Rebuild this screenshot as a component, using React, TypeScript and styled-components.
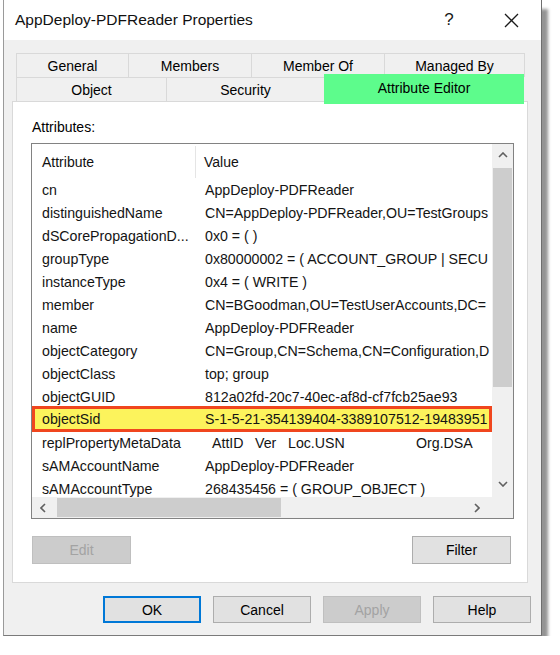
import React from 'react'
import styled, { createGlobalStyle } from 'styled-components'

const GlobalStyle = createGlobalStyle`
  html, body {
    margin: 0;
    padding: 0;
    background: #ffffff;
  }
  body {
    font-family: "Liberation Sans", Arial, sans-serif;
    color: #000000;
  }
  * { box-sizing: border-box; }
`

type Attr = { name: string; value: string; highlight?: boolean; meta?: boolean }

// values are cut where the list view cuts them in the dialog
const attributes: Attr[] = [
  { name: 'cn', value: 'AppDeploy-PDFReader' },
  { name: 'distinguishedName', value: 'CN=AppDeploy-PDFReader,OU=TestGroups' },
  { name: 'dSCorePropagationD...', value: '0x0 = ( )' },
  { name: 'groupType', value: '0x80000002 = ( ACCOUNT_GROUP | SECU' },
  { name: 'instanceType', value: '0x4 = ( WRITE )' },
  { name: 'member', value: 'CN=BGoodman,OU=TestUserAccounts,DC=' },
  { name: 'name', value: 'AppDeploy-PDFReader' },
  { name: 'objectCategory', value: 'CN=Group,CN=Schema,CN=Configuration,D' },
  { name: 'objectClass', value: 'top; group' },
  { name: 'objectGUID', value: '812a02fd-20c7-40ec-af8d-cf7fcb25ae93' },
  { name: 'objectSid', value: 'S-1-5-21-354139404-3389107512-19483951', highlight: true },
  { name: 'replPropertyMetaData', value: '', meta: true },
  { name: 'sAMAccountName', value: 'AppDeploy-PDFReader' },
  { name: 'sAMAccountType', value: '268435456 = ( GROUP_OBJECT )' },
]

const topTabs = [
  { label: 'General', width: 113 },
  { label: 'Members', width: 124 },
  { label: 'Member Of', width: 134 },
  { label: 'Managed By', width: 141 },
]

const bottomTabs = [
  { label: 'Object', width: 151 },
  { label: 'Security', width: 159 },
  { label: 'Attribute Editor', width: 200, selected: true },
]

const metaColumns = [
  { label: 'AttID', width: 43 },
  { label: 'Ver', width: 33 },
  { label: 'Loc.USN', width: 128 },
  { label: 'Org.DSA', width: 70 },
]

export default function App() {
  return (
    <>
      <GlobalStyle />
      <Window>
        <TitleBar>
          <Title>AppDeploy-PDFReader Properties</Title>
          <TitleButton>?</TitleButton>
          <TitleButton $gap={16}>
            <svg width="15" height="15" viewBox="0 0 15 15">
              <path d="M1 1 L14 14 M14 1 L1 14" stroke="#1a1a1a" strokeWidth="1.3" fill="none" />
            </svg>
          </TitleButton>
        </TitleBar>

        <TabStrip>
          <TabRow>
            {topTabs.map((t) => (
              <Tab key={t.label} $width={t.width}>{t.label}</Tab>
            ))}
          </TabRow>
          <TabRow>
            {bottomTabs.map((t) => (
              <Tab key={t.label} $width={t.width} $selected={t.selected}>{t.label}</Tab>
            ))}
          </TabRow>
        </TabStrip>

        <Panel>
          <FieldLabel>Attributes:</FieldLabel>
          <ListBox>
            <ListContent>
              <HeaderRow>
                <HeaderCell $divider>Attribute</HeaderCell>
                <HeaderCell>Value</HeaderCell>
              </HeaderRow>
              {attributes.map((a) => (
                <Row key={a.name} $highlight={a.highlight}>
                  <NameCell>{a.name}</NameCell>
                  <ValueCell>
                    {a.meta ? (
                      <MetaLine>
                        {metaColumns.map((m) => (
                          <MetaCol key={m.label} $width={m.width}>{m.label}</MetaCol>
                        ))}
                      </MetaLine>
                    ) : (
                      a.value
                    )}
                  </ValueCell>
                </Row>
              ))}
            </ListContent>

            <VScroll>
              <ArrowBox $size={22}>
                <svg width="10" height="6" viewBox="0 0 10 6">
                  <polyline points="1,5 5,1 9,5" stroke="#606060" strokeWidth="1.6" fill="none" />
                </svg>
              </ArrowBox>
              <VThumb $offset={2} $length={219} />
              <Spacer />
              <ArrowBox $size={26}>
                <svg width="10" height="6" viewBox="0 0 10 6">
                  <polyline points="1,1 5,5 9,1" stroke="#606060" strokeWidth="1.6" fill="none" />
                </svg>
              </ArrowBox>
            </VScroll>

            <HScroll>
              <ArrowBox $size={22}>
                <svg width="6" height="10" viewBox="0 0 6 10">
                  <polyline points="5,1 1,5 5,9" stroke="#606060" strokeWidth="1.6" fill="none" />
                </svg>
              </ArrowBox>
              <HThumb $offset={3} $length={224} />
              <Spacer />
              <ArrowBox $size={30}>
                <svg width="6" height="10" viewBox="0 0 6 10">
                  <polyline points="1,1 5,5 1,9" stroke="#606060" strokeWidth="1.6" fill="none" />
                </svg>
              </ArrowBox>
            </HScroll>

            <Corner />
          </ListBox>

          <PanelButtons>
            <DialogButton disabled>Edit</DialogButton>
            <DialogButton>Filter</DialogButton>
          </PanelButtons>
        </Panel>

        <Footer>
          <DialogButton $focused>OK</DialogButton>
          <DialogButton>Cancel</DialogButton>
          <DialogButton disabled>Apply</DialogButton>
          <DialogButton>Help</DialogButton>
        </Footer>
      </Window>
    </>
  )
}

const Window = styled.div`
  width: 539px;
  height: 636px;
  margin-left: 3px;
  display: flex;
  flex-direction: column;
  background: #f0f0f0;
  border: 1px solid #9a9a9a;
  border-top: none;
  border-right-color: #6e6e6e;
  border-bottom-color: #7a7a7a;
  box-shadow: 7px 8px 3px -1px rgba(0, 0, 0, 0.42);
`

const TitleBar = styled.div`
  height: 40px;
  flex-shrink: 0;
  display: flex;
  align-items: center;
  padding: 0 7px 0 11px;
  background: #ffffff;
`

const Title = styled.div`
  flex: 1;
  font-size: 15.5px;
  color: #111111;
`

const TitleButton = styled.div<{ $gap?: number }>`
  width: 46px;
  height: 40px;
  margin-left: ${(p) => p.$gap ?? 0}px;
  display: flex;
  align-items: center;
  justify-content: center;
  font-size: 17px;
  color: #1a1a1a;
`

const TabStrip = styled.div`
  margin: 13px 0 0 12px;
  display: flex;
  flex-direction: column;
`

const TabRow = styled.div`
  display: flex;
  height: 24px;
  align-items: flex-start;
`

const Tab = styled.div<{ $width: number; $selected?: boolean }>`
  position: relative;
  z-index: ${(p) => (p.$selected ? 2 : 0)};
  width: ${(p) => p.$width}px;
  height: ${(p) => (p.$selected ? 30 : 24)}px;
  margin-top: ${(p) => (p.$selected ? -3 : 0)}px;
  margin-left: -1px;
  display: flex;
  align-items: center;
  justify-content: center;
  padding-bottom: ${(p) => (p.$selected ? 4 : 0)}px;
  font-size: 14px;
  color: #000000;
  background: ${(p) => (p.$selected ? '#5dfc8c' : '#f0f0f0')};
  border: 1px solid ${(p) => (p.$selected ? '#5dfc8c' : '#d9d9d9')};
  border-bottom: none;

  &:first-child {
    margin-left: 0;
  }
`

const Panel = styled.div`
  position: relative;
  z-index: 1;
  width: 516px;
  height: 482px;
  margin-left: 8px;
  display: flex;
  flex-direction: column;
  background: #ffffff;
  border: 1px solid #d9d9d9;
`

const FieldLabel = styled.div`
  margin: 17px 0 0 19px;
  height: 17px;
  line-height: 17px;
  font-size: 14px;
`

const ListBox = styled.div`
  width: 483px;
  height: 376px;
  margin: 7px 0 0 18px;
  display: grid;
  grid-template-columns: 1fr 21px;
  grid-template-rows: 1fr 21px;
  border: 1px solid #828282;
  background: #ffffff;
`

const ListContent = styled.div`
  overflow: hidden;
  display: flex;
  flex-direction: column;
`

const HeaderRow = styled.div`
  height: 34px;
  flex-shrink: 0;
  display: grid;
  grid-template-columns: 164px 1fr;
`

const HeaderCell = styled.div<{ $divider?: boolean }>`
  display: flex;
  align-items: center;
  padding-left: ${(p) => (p.$divider ? 10 : 8)}px;
  font-size: 14px;
  color: #111111;
  border-right: ${(p) => (p.$divider ? '1px solid #e5e5e5' : 'none')};
  margin: 2px 0 0;
`

const Row = styled.div<{ $highlight?: boolean }>`
  flex-shrink: 0;
  height: ${(p) => (p.$highlight ? 26 : 23)}px;
  margin: ${(p) => (p.$highlight ? '-2px 0 -1px' : '0')};
  display: grid;
  grid-template-columns: 164px 1fr;
  align-items: center;
  font-size: 14.2px;
  color: #141414;
  white-space: nowrap;
  background: ${(p) => (p.$highlight ? '#fcf35c' : 'transparent')};
  box-shadow: ${(p) => (p.$highlight ? 'inset 0 0 0 3px #f0461e' : 'none')};
`

const NameCell = styled.div`
  padding-left: 10px;
  overflow: hidden;
`

const ValueCell = styled.div`
  padding-left: 9px;
  overflow: hidden;
`

const MetaLine = styled.div`
  display: flex;
  padding-left: 7px;
`

const MetaCol = styled.span<{ $width: number }>`
  flex-shrink: 0;
  width: ${(p) => p.$width}px;
`

const VScroll = styled.div`
  display: flex;
  flex-direction: column;
  background: #f0f0f0;
`

const HScroll = styled.div`
  display: flex;
  background: #f0f0f0;
`

const ArrowBox = styled.div<{ $size: number }>`
  flex: 0 0 ${(p) => p.$size}px;
  display: flex;
  align-items: center;
  justify-content: center;
`

const VThumb = styled.div<{ $offset: number; $length: number }>`
  flex: 0 0 ${(p) => p.$length}px;
  margin: ${(p) => p.$offset}px 1px 0;
  background: #cdcdcd;
`

const HThumb = styled.div<{ $offset: number; $length: number }>`
  flex: 0 0 ${(p) => p.$length}px;
  margin: 1px 0 1px ${(p) => p.$offset}px;
  background: #cdcdcd;
`

const Spacer = styled.div`
  flex: 1;
`

const Corner = styled.div`
  background: #f0f0f0;
`

const PanelButtons = styled.div`
  display: flex;
  justify-content: space-between;
  margin: 17px 16px 0 19px;
`

const DialogButton = styled.button<{ $focused?: boolean }>`
  width: 99px;
  height: 28px;
  padding: 0;
  font-family: "Liberation Sans", Arial, sans-serif;
  font-size: 14px;
  color: #000000;
  background: #e1e1e1;
  border: ${(p) => (p.$focused ? '2px solid #0078d7' : '1px solid #adadad')};

  &:disabled {
    color: #a3a3a3;
    background: #cccccc;
    border-color: #bfbfbf;
  }
`

const Footer = styled.div`
  display: flex;
  justify-content: flex-end;
  gap: 12px;
  margin-top: 13px;
  padding-right: 10px;

  & > button {
    width: 98px;
    height: 27px;
  }
`
